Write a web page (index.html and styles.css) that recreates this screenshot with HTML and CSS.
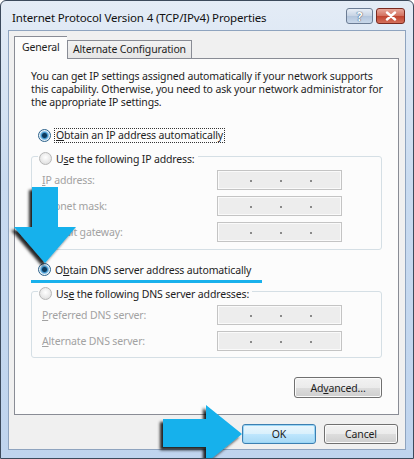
FILE: index.html
```html
<!DOCTYPE html>
<html lang="en">
<head>
  <meta charset="UTF-8" />
  <title>Internet Protocol Version 4 (TCP/IPv4) Properties</title>
  <link rel="stylesheet" href="styles.css">
</head>
<body>
  <div class="window">
    <div class="titlebar">
      <span class="title">Internet Protocol Version 4 (TCP/IPv4) Properties</span>
      <div class="caption-btns">
        <span class="cap-btn help">?</span>
        <span class="cap-btn close">
          <svg width="14" height="10" viewBox="0 0 14 10"><path d="M3 1.5 L11 8.5 M11 1.5 L3 8.5" stroke="#fff" stroke-width="2.4" stroke-linecap="round"/></svg>
        </span>
      </div>
    </div>

    <div class="client">
      <div class="tabs">
        <span class="tab active">General</span>
        <span class="tab">Alternate Configuration</span>
      </div>

      <div class="panel">
        <p class="intro">You can get IP settings assigned automatically if your network supports this capability. Otherwise, you need to ask your network administrator for the appropriate IP settings.</p>

        <div class="option first">
          <span class="radio checked"></span>
          <span class="focus"><u>O</u>btain an IP address automatically</span>
        </div>

        <div class="group">
          <div class="legend">
            <span class="radio"></span>
            <span>U<u>s</u>e the following IP address:</span>
          </div>
          <div class="field">
            <span class="lbl"><u>I</u>P address:</span>
            <span class="ipbox"><i></i><i></i><i></i></span>
          </div>
          <div class="field">
            <span class="lbl">S<u>u</u>bnet mask:</span>
            <span class="ipbox"><i></i><i></i><i></i></span>
          </div>
          <div class="field">
            <span class="lbl"><u>D</u>efault gateway:</span>
            <span class="ipbox"><i></i><i></i><i></i></span>
          </div>
        </div>

        <div class="option dns">
          <span class="radio checked"></span>
          <span>O<u>b</u>tain DNS server address automatically</span>
        </div>

        <div class="group dns-group">
          <div class="legend">
            <span class="radio"></span>
            <span>Us<u>e</u> the following DNS server addresses:</span>
          </div>
          <div class="field">
            <span class="lbl"><u>P</u>referred DNS server:</span>
            <span class="ipbox"><i></i><i></i><i></i></span>
          </div>
          <div class="field">
            <span class="lbl"><u>A</u>lternate DNS server:</span>
            <span class="ipbox"><i></i><i></i><i></i></span>
          </div>
        </div>

        <div class="panel-foot">
          <span class="btn">Ad<u>v</u>anced...</span>
        </div>
      </div>

      <div class="dialog-btns">
        <span class="btn default">OK</span>
        <span class="btn">Cancel</span>
      </div>
    </div>

    <!-- annotation overlay -->
    <div class="mark-line"></div>
    <svg class="arrows" width="414" height="459" viewBox="0 0 414 459">
      <defs>
        <filter id="shade" x="-30%" y="-30%" width="160%" height="160%">
          <feDropShadow dx="-3" dy="3" stdDeviation="1.6" flood-color="#000" flood-opacity="0.85"/>
        </filter>
      </defs>
      <polygon filter="url(#shade)" fill="#19b1ec"
        points="31,186 57,186 57,226 75,226 44,262 13,226 31,226"/>
      <polygon filter="url(#shade)" fill="#19b1ec"
        points="162,418 205,418 205,404 241,433 205,462 205,446 162,446"/>
    </svg>
  </div>
</body>
</html>
```

FILE: styles.css
```css
* { margin: 0; padding: 0; box-sizing: border-box; }
body {
  font-family: "Noto Sans", sans-serif;
  font-size: 10.5px;
  letter-spacing: -0.15px;
  color: #1e1e1e;
  background: #fff;
}
u { text-decoration: underline; text-underline-offset: 1px; }

.window {
  position: relative;
  width: 414px; height: 459px;
  background: linear-gradient(#e4ecf6, #c9dbf0 40%, #bfd4ee);
  border: 1px solid #3c4a5c;
  border-radius: 6px 6px 0 0;
  overflow: hidden;
  display: flex; flex-direction: column;
}
.titlebar {
  height: 29px;
  display: flex; align-items: center; justify-content: space-between;
  padding: 0 8px 0 11px;
}
.title { font-size: 11.5px; color: #111; margin-top: 3px; }
.caption-btns { display: flex; gap: 3px; align-self: flex-start; padding-top: 7px; }
.cap-btn {
  height: 16px; border-radius: 3px;
  display: flex; align-items: center; justify-content: center;
  border: 1px solid #6b7c94;
}
.help {
  width: 27px;
  background: linear-gradient(#e8eef6, #c6d3e4 50%, #b3c5dc 51%, #c9d8ea);
  color: #fff; font-weight: bold; font-size: 12px;
  text-shadow: 0 0 1px #33475f, 0 0 1px #33475f;
}
.close {
  width: 29px;
  border-color: #7a2a20;
  background: linear-gradient(#e9a89b, #d2705f 50%, #c0432f 51%, #d4705c);
}

.client {
  flex: 1;
  margin: 0 7px 8px 7px;
  background: #f0f0f0;
  border: 1px solid #8fa4bf;
  padding: 4px 7px 0 5px;
}
.tabs { display: flex; align-items: flex-end; height: 23px; position: relative; z-index: 1; }
.tab {
  height: 18px;
  padding: 0 5px;
  border: 1px solid #898c95; border-bottom: none;
  background: linear-gradient(#f2f2f2, #e6e6e6);
  line-height: 17px;
}
.tab.active {
  height: 23px;
  width: 53px;
  padding: 0 7px;
  background: #fcfcfc;
  border-right: none;
  line-height: 20px;
  margin-bottom: -1px;
}
.panel {
  width: 385px;
  height: 357px;
  background: #fcfcfc;
  border: 1px solid #898c95;
  padding: 11px 16px 0 16px;
  display: flex; flex-direction: column;
}
.intro { line-height: 13px; width: 352px; }

.option { display: flex; align-items: center; height: 13px; padding-left: 7px; gap: 4px; }
.option.first { margin-top: 20px; }
.focus { outline: 1px dotted #333; padding: 0 1px; line-height: 13px; }

.radio {
  width: 13px; height: 13px; border-radius: 50%;
  border: 1px solid #8e8f8f;
  background: radial-gradient(circle at 50% 40%, #fff, #d8d8d8);
  flex: none;
}
.radio.checked {
  border-color: #2c628b;
  background: radial-gradient(circle, #0d3a5c 0 2px, #3c90c8 3px, #8cc4e8 4px, #e7f1f8 5px);
}

.group {
  margin-top: 14px;
  height: 94px;
  border: 1px solid #d5dfe5;
  border-radius: 3px;
  padding: 0 0 0 10px;
}
.legend {
  display: flex; align-items: center; gap: 4px;
  width: max-content;
  height: 13px; margin: -5px 0 0 -4px;
  padding: 0 3px 0 1px;
  background: #fcfcfc;
}
.legend .radio { border-color: #b7b7b7; }
.field {
  display: flex; align-items: center;
  height: 20px; margin-top: 6px;
}
.legend + .field { margin-top: 5px; }
.lbl { width: 175px; color: #a2a2a2; }
.ipbox {
  width: 125px; height: 20px;
  border: 1px solid #c4c4c4;
  box-shadow: inset 0 0 0 1px #fafafa;
  background: #ededed;
  position: relative;
}
.ipbox i {
  position: absolute; top: 9px;
  width: 2px; height: 2px; background: #8a8a8a;
}
.ipbox i:nth-child(1) { left: 32px; }
.ipbox i:nth-child(2) { left: 62px; }
.ipbox i:nth-child(3) { left: 92px; }

.option.dns { margin-top: 13px; }
.dns-group { margin-top: 15px; height: 67px; }

.panel-foot { display: flex; justify-content: flex-end; margin-top: 19px; }
.btn {
  display: inline-flex; align-items: center; justify-content: center;
  height: 21px;
  border: 1px solid #707070; border-radius: 3px;
  background: linear-gradient(#f2f2f2, #ebebeb 50%, #dddddd 51%, #cfcfcf);
  box-shadow: inset 0 0 0 1px #fbfbfb;
}
.panel-foot .btn { width: 88px; }
.dialog-btns { display: flex; justify-content: flex-end; gap: 8px; margin-top: 9px; }
.dialog-btns .btn { width: 74px; height: 20px; }
.btn.default {
  border-color: #3c7fb1;
  background: linear-gradient(#eaf6fd, #d9f0fc 50%, #bee6fd 51%, #a7d9f5);
  box-shadow: inset 0 0 0 1px #9ad6f6;
}

.mark-line {
  position: absolute; left: 30px; top: 279px;
  width: 231px; height: 3px;
  background: #19b1ec;
}
.arrows { position: absolute; left: 0; top: 0; pointer-events: none; }
```
